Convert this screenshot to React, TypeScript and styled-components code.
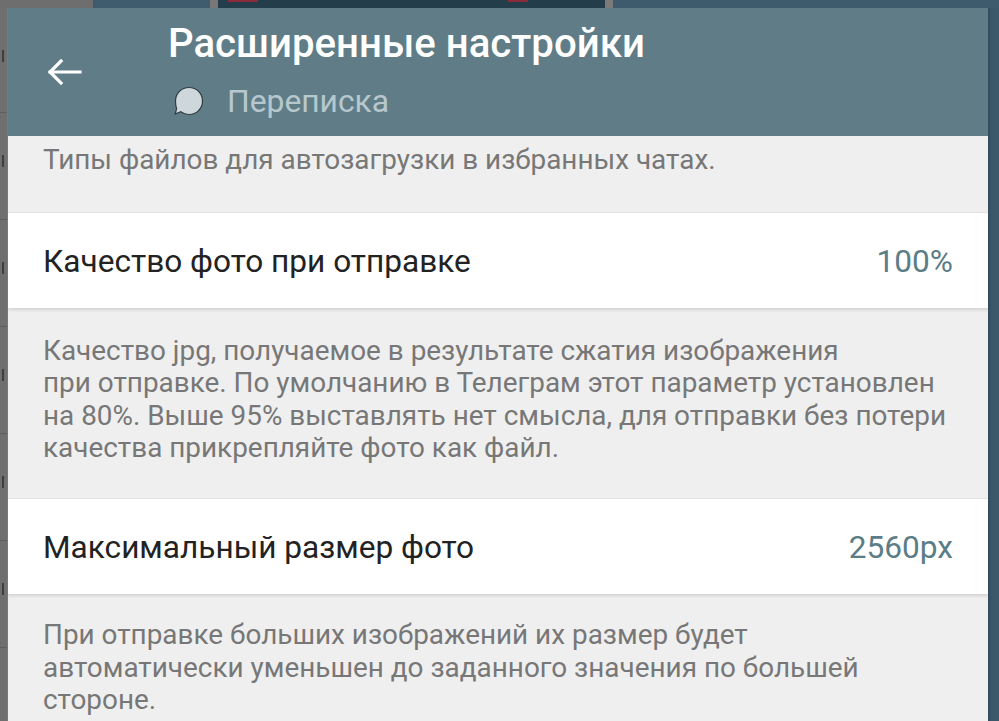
import React from "react";
import styled, { createGlobalStyle } from "styled-components";

const Global = createGlobalStyle`
  html, body { margin: 0; padding: 0; }
  body {
    width: 999px;
    height: 721px;
    overflow: hidden;
    font-family: Roboto, "Noto Sans", "Liberation Sans", sans-serif;
    -webkit-font-smoothing: antialiased;
  }
`;

const Page = styled.div`
  display: grid;
  grid-template-columns: 8px 980px 11px;
  grid-template-rows: 8px 713px;
  width: 999px;
  height: 721px;
  background: #3b5669;
`;

const TopStrip = styled.div`
  grid-column: 1 / 4;
  display: flex;
`;

const Seg = styled.div<{ $w: number; $c: string }>`
  width: ${(p) => p.$w}px;
  flex: ${(p) => (p.$w === 0 ? 1 : "none")};
  background: ${(p) => p.$c};
  position: relative;
`;

const RedMark = styled.span<{ $l: number; $w: number }>`
  position: absolute;
  left: ${(p) => p.$l}px;
  top: 0;
  width: ${(p) => p.$w}px;
  height: 2px;
  background: #8a2a3a;
`;

const LeftStrip = styled.div`
  display: flex;
  flex-direction: column;
  background: #6f6f6f;
  border-right: 1px solid #7a7a7a;
`;

const LeftCell = styled.div<{ $h: number }>`
  height: ${(p) => p.$h}px;
  border-bottom: 1px solid #5e5e5e;
  position: relative;
  &::after {
    content: "";
    position: absolute;
    left: 2px;
    top: 40%;
    width: 2px;
    height: 12px;
    background: #3e3e3e;
  }
`;

const RightStrip = styled.div`
  background: linear-gradient(90deg, #2f4a5c 0px, #3a5669 3px, #3c586b 100%);
`;

const Dialog = styled.div`
  display: flex;
  flex-direction: column;
  background: #efefef;
  overflow: hidden;
`;

const Header = styled.header`
  height: 128px;
  flex: none;
  display: flex;
  background: #607d87;
`;

const BackButton = styled.div`
  width: 160px;
  display: flex;
  align-items: center;
  padding-left: 38px;
  box-sizing: border-box;
  padding-bottom: 1px;
`;

const HeaderText = styled.div`
  display: flex;
  flex-direction: column;
  padding-top: 13px;
`;

const Title = styled.div`
  color: #ffffff;
  font-size: 40.2px;
  font-weight: 500;
  line-height: 46px;
`;

const Subtitle = styled.div`
  display: flex;
  align-items: center;
  margin-top: 16px;
  gap: 21px;
  color: #b6c8ce;
  font-size: 31.8px;
  line-height: 36px;
  padding-left: 2px;
`;

const Scroll = styled.div`
  display: flex;
  flex-direction: column;
`;

const Hint = styled.div<{ $pt: number; $pb: number }>`
  padding: ${(p) => p.$pt}px 20px ${(p) => p.$pb}px 35px;
  color: #777777;
  font-size: 27.9px;
  line-height: 32.6px;
  white-space: nowrap;
`;

const Row = styled.div`
  height: 96px;
  box-sizing: border-box;
  display: flex;
  align-items: center;
  justify-content: space-between;
  padding: 0 35px 0 35px;
  background: #ffffff;
  border-top: 1px solid #e2e2e2;
  box-shadow: 0 2px 3px rgba(0, 0, 0, 0.12);
  position: relative;
`;

const Label = styled.div`
  color: #222222;
  font-size: 31.6px;
  padding-top: 2px;
`;

const Value = styled.div`
  color: #5a7d87;
  font-size: 31.6px;
  padding-top: 2px;
`;

const BackArrow = () => (
  <svg width="36" height="26" viewBox="0 0 36 26">
    <path
      d="M34 13H4 M15 2L4 13l11 11"
      fill="none"
      stroke="#ffffff"
      strokeWidth="3.2"
      strokeLinecap="square"
    />
  </svg>
);

const Bubble = () => (
  <svg width="36" height="32" viewBox="0 0 36 32">
    <path
      d="M19 2.5 C26.5 2.5 32.5 8.5 32.5 16 C32.5 23.5 26.5 29.5 19 29.5 C15.8 29.5 13 28.5 10.8 26.8 L5.2 29 L6.6 23.6 C5.8 21.8 5.5 18.9 5.5 16 C5.5 8.5 11.5 2.5 19 2.5 Z"
      fill="#ced8dc"
      stroke="#2e3b40"
      strokeWidth="1.2"
    />
  </svg>
);

export default function App() {
  return (
    <>
      <Global />
      <Page>
        <TopStrip>
          <Seg $w={93} $c="#6e6e6e" />
          <Seg $w={117} $c="#3f5b6e" />
          <Seg $w={8} $c="#777777" />
          <Seg $w={387} $c="#233d4b">
            <RedMark $l={10} $w={30} />
            <RedMark $l={290} $w={20} />
          </Seg>
          <Seg $w={8} $c="#7a7a7a" />
          <Seg $w={0} $c="#3e5b6e" />
        </TopStrip>
        <LeftStrip>
          <LeftCell $h={104} />
          <LeftCell $h={106} />
          <LeftCell $h={106} />
          <LeftCell $h={106} />
          <LeftCell $h={106} />
          <LeftCell $h={106} />
        </LeftStrip>
        <Dialog>
          <Header>
            <BackButton>
              <BackArrow />
            </BackButton>
            <HeaderText>
              <Title>Расширенные настройки</Title>
              <Subtitle>
                <Bubble />
                <span>Переписка</span>
              </Subtitle>
            </HeaderText>
          </Header>
          <Scroll>
            <Hint $pt={8} $pb={35}>
              Типы файлов для автозагрузки в избранных чатах.
            </Hint>
            <Row>
              <Label>Качество фото при отправке</Label>
              <Value>100%</Value>
            </Row>
            <Hint $pt={27} $pb={33}>
              Качество jpg, получаемое в результате сжатия изображения
              <br />
              при отправке. По умолчанию в Телеграм этот параметр установлен
              <br />
              на 80%. Выше 95% выставлять нет смысла, для отправки без потери
              <br />
              качества прикрепляйте фото как файл.
            </Hint>
            <Row>
              <Label>Максимальный размер фото</Label>
              <Value>2560px</Value>
            </Row>
            <Hint $pt={25} $pb={20}>
              При отправке больших изображений их размер будет
              <br />
              автоматически уменьшен до заданного значения по большей
              <br />
              стороне.
            </Hint>
          </Scroll>
        </Dialog>
        <RightStrip />
      </Page>
    </>
  );
}
